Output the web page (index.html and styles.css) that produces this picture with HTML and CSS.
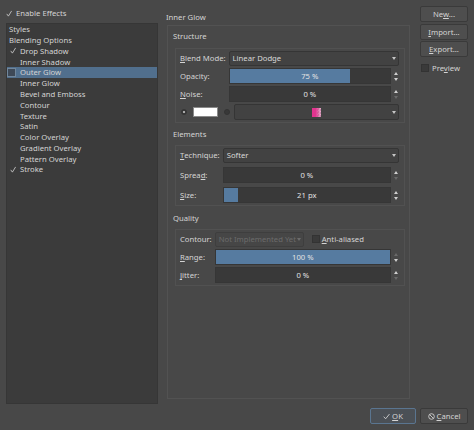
FILE: index.html
```html
<!DOCTYPE html>
<html lang="en">
<head>
  <meta charset="UTF-8">
  <title>Layer Styles</title>
  <link rel="stylesheet" href="styles.css">
</head>
<body>

<div class="dialog">
  <div class="top">
    <!-- Left: effect list -->
    <div class="sidebar">
      <div class="enable">
        <svg class="tick" viewBox="0 0 8 9" width="6" height="7"><path d="M1 5 L3.2 8 L7.5 1"/></svg>
        <span>Enable Effects</span>
      </div>
      <ul class="styles-list">
        <li class="root">Styles</li>
        <li class="root">Blending Options</li>
        <li><span class="mark"><svg class="tick" viewBox="0 0 8 9" width="6" height="7"><path d="M1 5 L3.2 8 L7.5 1"/></svg></span>Drop Shadow</li>
        <li><span class="mark"></span>Inner Shadow</li>
        <li class="selected"><span class="mark"><span class="box"></span></span>Outer Glow</li>
        <li><span class="mark"></span>Inner Glow</li>
        <li><span class="mark"></span>Bevel and Emboss</li>
        <li><span class="mark"></span>Contour</li>
        <li><span class="mark"></span>Texture</li>
        <li><span class="mark"></span>Satin</li>
        <li><span class="mark"></span>Color Overlay</li>
        <li><span class="mark"></span>Gradient Overlay</li>
        <li><span class="mark"></span>Pattern Overlay</li>
        <li><span class="mark"><svg class="tick" viewBox="0 0 8 9" width="6" height="7"><path d="M1 5 L3.2 8 L7.5 1"/></svg></span>Stroke</li>
      </ul>
    </div>

    <!-- Middle: effect page -->
    <div class="main">
      <div class="page-title">Inner Glow</div>
      <div class="panel">

        <div class="group-title">Structure</div>
        <div class="frame form">
          <label><u>B</u>lend Mode:</label>
          <div class="combo">Linear Dodge<span class="arrow"></span></div>

          <label>Opacity:</label>
          <div class="spin">
            <div class="track" style="--v: 75%">75 %</div>
            <div class="arrows"><i class="up"></i><i class="down"></i></div>
          </div>

          <label><u>N</u>oise:</label>
          <div class="spin">
            <div class="track" style="--v: 0%">0 %</div>
            <div class="arrows"><i class="up"></i><i class="down dim"></i></div>
          </div>

          <div class="color-row">
            <span class="radio on"></span>
            <span class="swatch"></span>
            <span class="radio"></span>
            <div class="combo gradient">
              <span></span>
              <span class="grad"></span>
              <span class="arrow"></span>
            </div>
          </div>
        </div>

        <div class="group-title elements">Elements</div>
        <div class="frame form loose">
          <label><u>T</u>echnique:</label>
          <div class="combo">Softer<span class="arrow"></span></div>

          <label>Sprea<u>d</u>:</label>
          <div class="spin">
            <div class="track" style="--v: 0%">0 %</div>
            <div class="arrows"><i class="up"></i><i class="down dim"></i></div>
          </div>

          <label><u>S</u>ize:</label>
          <div class="spin">
            <div class="track" style="--v: 8.5%">21 px</div>
            <div class="arrows"><i class="up"></i><i class="down"></i></div>
          </div>
        </div>

        <div class="group-title quality">Quality</div>
        <div class="frame form">
          <label>Contour:</label>
          <div class="contour">
            <div class="combo disabled">Not Implemented Yet<span class="arrow"></span></div>
            <span class="check"></span>
            <span><u>A</u>nti-aliased</span>
          </div>

          <label><u>R</u>ange:</label>
          <div class="spin">
            <div class="track" style="--v: 100%">100 %</div>
            <div class="arrows"><i class="up dim"></i><i class="down"></i></div>
          </div>

          <label><u>J</u>itter:</label>
          <div class="spin">
            <div class="track" style="--v: 0%">0 %</div>
            <div class="arrows"><i class="up"></i><i class="down dim"></i></div>
          </div>
        </div>

      </div>
    </div>

    <!-- Right: preset buttons -->
    <div class="side-buttons">
      <button class="btn"><span>Ne<u>w</u>...</span></button>
      <button class="btn"><span><u>I</u>mport...</span></button>
      <button class="btn"><span><u>E</u>xport...</span></button>
      <div class="preview"><span class="check"></span><span>Pre<u>v</u>iew</span></div>
    </div>
  </div>

  <div class="footer">
    <button class="btn ok">
      <svg viewBox="0 0 8 8" width="7" height="7"><path d="M0.8 4.2 L3 6.6 L7.4 1.2"/></svg>
      <span><u>O</u>K</span>
    </button>
    <button class="btn">
      <svg viewBox="0 0 8 8" width="7" height="7"><circle cx="4" cy="4" r="3.2"/><path d="M1.8 1.8 L6.2 6.2"/></svg>
      <span><u>C</u>ancel</span>
    </button>
  </div>
</div>

</body>
</html>
```

FILE: styles.css
```css
* {
  box-sizing: border-box;
}

html, body {
  margin: 0;
}

body {
  width: 474px;
  height: 430px;
  overflow: hidden;
  background: #484848;
  color: #d4d4d4;
  font-family: "Noto Sans", sans-serif;
  font-size: 7.7px;
}

u {
  text-decoration-thickness: 1px;
  text-underline-offset: 1px;
}

.dialog {
  display: flex;
  flex-direction: column;
  height: 430px;
  padding: 0 6px 6px 6px;
}

.top {
  display: flex;
  height: 404px;
}

/* Left list */
.sidebar {
  width: 152px;
  display: flex;
  flex-direction: column;
}

.enable {
  height: 23px;
  display: flex;
  align-items: center;
  gap: 4px;
  padding-top: 3px;
}

.tick path {
  fill: none;
  stroke: #d0d0d0;
  stroke-width: 1.1;
}

.styles-list {
  flex: 1;
  margin: 0;
  padding: 0;
  list-style: none;
  background: #3b3b3b;
  border: 1px solid #363636;
}

.styles-list li {
  height: 10.77px;
  display: flex;
  align-items: center;
  white-space: nowrap;
}

.styles-list li.root {
  padding-left: 2px;
}

.mark {
  width: 13px;
  height: 10px;
  display: flex;
  align-items: center;
  padding-left: 3px;
}

.styles-list li.selected {
  background: #516f8d;
}

.box {
  width: 9px;
  height: 9px;
  margin-left: -3px;
  background: #3e4957;
  border: 1px solid #71879c;
}

/* Middle page */
.main {
  width: 244px;
  margin-left: 8px;
}

.page-title {
  height: 25px;
  padding-top: 11px;
  line-height: 12px;
}

.panel {
  height: 374px;
  margin-left: 1px;
  border: 1px solid #525252;
}

.group-title {
  height: 22px;
  padding: 4px 0 0 5px;
  line-height: 12px;
}

.group-title.elements {
  padding-top: 5px;
}

.group-title.quality {
  height: 23px;
  padding-top: 6px;
}

.frame {
  margin: 0 4px 0 7px;
  padding: 1px 5px 2px 4px;
  border: 1px solid #515151;
}

.form {
  display: grid;
  grid-template-columns: auto 1fr;
  grid-auto-rows: 16px;
  column-gap: 3px;
  row-gap: 2px;
}

.form.loose {
  row-gap: 4px;
}

.form label {
  display: flex;
  align-items: center;
  white-space: nowrap;
}

.combo {
  height: 15px;
  align-self: center;
  display: flex;
  align-items: center;
  padding-left: 3px;
  background: #424242;
  border: 1px solid #353535;
  border-radius: 2px;
  color: #d8d8d8;
  white-space: nowrap;
}

.arrow {
  margin-left: auto;
  margin-right: 2px;
  border-left: 2.5px solid transparent;
  border-right: 2.5px solid transparent;
  border-top: 3px solid #c6c6c6;
}

.spin {
  display: flex;
  gap: 1px;
}

.track {
  flex: 1;
  display: flex;
  align-items: center;
  justify-content: center;
  border: 1px solid #363636;
  background: linear-gradient(to right, #567ba0 var(--v), #393939 var(--v));
  color: #e2e2e2;
}

.arrows {
  width: 7px;
  display: flex;
  flex-direction: column;
  align-items: center;
  justify-content: center;
  gap: 3px;
}

.arrows i {
  border-left: 2.5px solid transparent;
  border-right: 2.5px solid transparent;
}

.arrows .up {
  border-bottom: 3px solid #cfcfcf;
}

.arrows .down {
  border-top: 3px solid #cfcfcf;
}

.arrows .up.dim {
  border-bottom-color: #6a6a6a;
}

.arrows .down.dim {
  border-top-color: #6a6a6a;
}

/* Colour / gradient row */
.color-row {
  grid-column: 1 / -1;
  display: flex;
  align-items: center;
}

.radio {
  width: 6px;
  height: 6px;
  border-radius: 50%;
  background: #383838;
  border: 1px solid #333;
}

.radio.on {
  margin-left: 1px;
  background: radial-gradient(circle, #a9a9a9 0 1.3px, #333 1.6px);
}

.swatch {
  width: 25px;
  height: 10px;
  margin: 0 6px;
  background: #fff;
  border: 1px solid #8a8a8a;
}

.combo.gradient {
  flex: 1;
  height: 16px;
  margin-left: 4px;
  display: grid;
  grid-template-columns: 1fr auto 1fr;
  padding-left: 0;
}

.combo.gradient .arrow {
  justify-self: end;
  margin-right: 2px;
}

.grad {
  width: 9px;
  height: 9px;
  background:
    linear-gradient(to right, #e2348f 40%, rgba(226, 52, 143, 0.3)),
    repeating-conic-gradient(#e8e8e8 0 25%, #b8b8b8 0 50%) 0 0 / 3px 3px;
}

/* Quality row */
.contour {
  display: flex;
  align-items: center;
  white-space: nowrap;
}

.combo.disabled {
  width: 89px;
  background: #464646;
  border-color: #3e3e3e;
  color: #6c6c6c;
}

.combo.disabled .arrow {
  border-top-color: #6c6c6c;
}

.check {
  width: 8px;
  height: 8px;
  background: #3a3a3a;
  border: 1px solid #333;
}

.contour .check {
  margin: 0 2px 0 8px;
}

/* Right buttons */
.side-buttons {
  width: 48px;
  margin-left: 10px;
  padding-top: 6px;
  display: flex;
  flex-direction: column;
  gap: 1.5px;
}

.btn {
  height: 16px;
  margin: 0;
  padding: 0;
  display: flex;
  align-items: center;
  justify-content: center;
  gap: 2px;
  background: #4e4e4e;
  border: 1px solid #3a3a3a;
  border-radius: 2px;
  color: #d4d4d4;
  font-family: inherit;
  font-size: inherit;
}

.preview {
  margin-top: 4px;
  display: flex;
  align-items: center;
  gap: 3px;
  padding-left: 1px;
}

/* Footer */
.footer {
  display: flex;
  justify-content: flex-end;
  gap: 4px;
  margin-top: 4px;
}

.footer .btn {
  width: 48px;
}

.footer .btn.ok {
  width: 46px;
  background: #4b5056;
  border-color: #5a7590;
}

.footer svg path,
.footer svg circle {
  fill: none;
  stroke: #d4d4d4;
  stroke-width: 1;
}
```
